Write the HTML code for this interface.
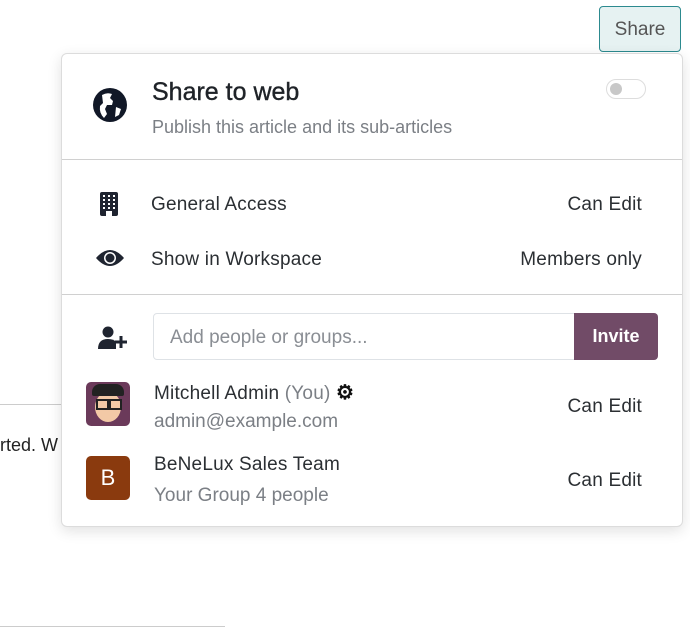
<!DOCTYPE html>
<html><head><style>
body{margin:0;width:690px;height:631px;background:#fff;font-family:"Liberation Sans",sans-serif;position:relative;overflow:hidden;color:#212529}
.a{position:absolute;white-space:nowrap}
.panel{position:absolute;left:61px;top:53px;width:620px;height:472px;border:1px solid #dcdcdc;border-radius:6px;background:#fff;box-shadow:0 4px 14px rgba(0,0,0,.12)}
.hr{position:absolute;left:0;right:0;height:1px;background:#d0d0d0}
.t{font-size:19px;color:#2b2f33;letter-spacing:0.2px}
.g{color:#7b7f85}
</style></head><body>
<div class="a" style="left:0;top:404px;width:61px;height:1px;background:#ccc"></div>
<div class="a" style="left:0;top:435px;font-size:18px;color:#222">rted. W</div>
<div class="a" style="left:0;top:626px;width:225px;height:1px;background:#ccc"></div>
<div class="a" style="left:599px;top:6px;width:80px;height:44px;border:1px solid #2c8a8f;border-radius:4px;background:#e6f2f2;font-size:19px;color:#555;text-align:center;line-height:46px">Share</div>
<div class="panel">
 <svg class="a" style="left:30px;top:33px" width="36" height="36" viewBox="0 0 36 36"><circle cx="18" cy="18" r="17" fill="#111827"/><path d="M10 8 q5 -3 10 -1 l-2 4 l3 3 l-1 4 l-5 0 l-2 4 l2 5 l-3 4 q-5 -5 -4 -12 l3 -3z M24 20 l5 2 l-2 6 l-4 2z" fill="#fff"/></svg>
 <div class="a" style="left:90px;top:24px;font-size:25px;color:#1f2328;-webkit-text-stroke:0.4px #1f2328">Share to web</div>
 <div class="a g" style="left:90px;top:63px;font-size:18px">Publish this article and its sub-articles</div>
 <div class="a" style="left:544px;top:25px;width:38px;height:18px;border:1px solid #ddd;border-radius:10px"></div>
 <div class="a" style="left:548px;top:29px;width:12px;height:12px;border-radius:50%;background:#c8c8c8"></div>
 <div class="hr" style="top:105px"></div>
 <svg class="a" style="left:37px;top:137px" width="20" height="26" viewBox="0 0 20 26"><rect x="1" y="1" width="18" height="24" rx="2" fill="#1f2430"/><g fill="#fff"><rect x="4" y="4" width="2" height="2"/><rect x="9" y="4" width="2" height="2"/><rect x="14" y="4" width="2" height="2"/><rect x="4" y="8" width="2" height="2"/><rect x="9" y="8" width="2" height="2"/><rect x="14" y="8" width="2" height="2"/><rect x="4" y="12" width="2" height="2"/><rect x="9" y="12" width="2" height="2"/><rect x="14" y="12" width="2" height="2"/><rect x="4" y="16" width="2" height="2"/><rect x="9" y="16" width="2" height="2"/><rect x="14" y="16" width="2" height="2"/><rect x="7" y="20" width="6" height="5"/></g></svg>
 <div class="a t" style="left:89px;top:140px">General Access</div>
 <div class="a t" style="right:40px;top:140px">Can Edit</div>
 <svg class="a" style="left:33px;top:194px" width="30" height="20" viewBox="0 0 30 20"><path d="M1 10 Q15 -6 29 10 Q15 26 1 10Z" fill="#1f2430"/><circle cx="15" cy="10" r="6" fill="#fff"/><circle cx="15" cy="10" r="4.5" fill="#1f2430"/></svg>
 <div class="a t" style="left:89px;top:195px">Show in Workspace</div>
 <div class="a t" style="right:40px;top:195px">Members only</div>
 <div class="hr" style="top:240px"></div>
 <svg class="a" style="left:36px;top:272px" width="32" height="24" viewBox="0 0 32 24"><circle cx="10" cy="6" r="5.5" fill="#1f2430"/><path d="M0 23 q0 -10 10 -10 q6 0 8 3 v7z" fill="#1f2430"/><path d="M23 10 v12 M17 16 h12" stroke="#1f2430" stroke-width="3"/></svg>
 <div class="a" style="left:91px;top:259px;width:422px;height:45px;border:1px solid #dee2e6;border-radius:4px 0 0 4px"></div>
 <div class="a g" style="left:108px;top:273px;font-size:19px;color:#8a8e94">Add people or groups...</div>
 <div class="a" style="left:512px;top:259px;width:84px;height:47px;background:#714b67;border-radius:0 4px 4px 0;color:#fff;font-weight:bold;font-size:18px;text-align:center;line-height:47px">Invite</div>
 <div class="a" style="left:24px;top:328px;width:44px;height:44px;border-radius:5px;background:#6b3a5a;overflow:hidden"><div style="position:absolute;left:9px;top:10px;width:26px;height:30px;border-radius:50%;background:#f3c9a6"></div><div style="position:absolute;left:6px;top:2px;width:32px;height:12px;border-radius:8px 8px 2px 2px;background:#222"></div><div style="position:absolute;left:10px;top:17px;width:9px;height:7px;border:2px solid #222"></div><div style="position:absolute;left:23px;top:17px;width:9px;height:7px;border:2px solid #222"></div></div>
 <div class="a t" style="left:92px;top:326px">Mitchell Admin <span class="g">(You)</span> <span style="font-size:20px;font-weight:bold;color:#111">&#9881;</span></div>
 <div class="a g" style="left:92px;top:357px;font-size:19px">admin@example.com</div>
 <div class="a t" style="right:40px;top:342px">Can Edit</div>
 <div class="a" style="left:24px;top:402px;width:44px;height:44px;border-radius:5px;background:#8a3a0e;color:#fff;font-size:22px;text-align:center;line-height:44px">B</div>
 <div class="a t" style="left:92px;top:400px">BeNeLux Sales Team</div>
 <div class="a g" style="left:92px;top:431px;font-size:19px">Your Group 4 people</div>
 <div class="a t" style="right:40px;top:416px">Can Edit</div>
</div>
</body></html>
